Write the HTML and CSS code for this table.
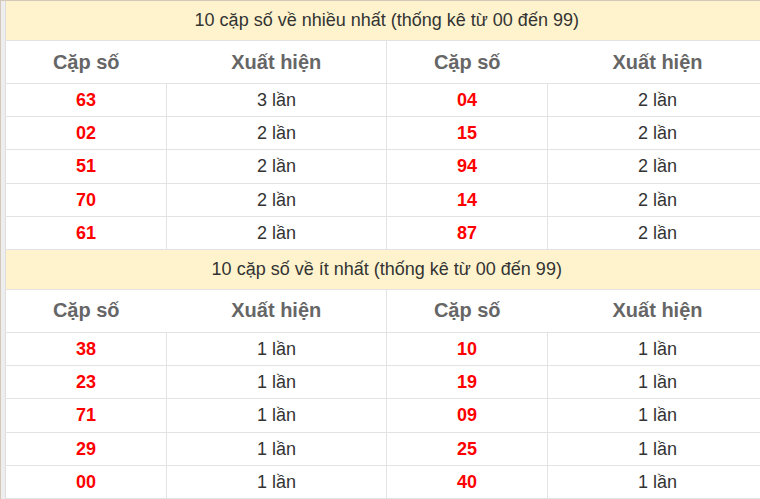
FILE: index.html
```html
<!DOCTYPE html>
<html lang="vi">
<head>
<meta charset="utf-8">
<link rel="stylesheet" href="styles.css">
</head>
<body>
<div class="frame">
<table class="stats">
  <colgroup><col class="c1"><col class="c2"><col class="c1"><col class="c2"></colgroup>
  <tr class="title"><td colspan="4">10 cặp số về nhiều nhất (thống kê từ 00 đến 99)</td></tr>
  <tr class="head"><th>Cặp số</th><th class="mid">Xuất hiện</th><th>Cặp số</th><th>Xuất hiện</th></tr>
  <tr><td class="num">63</td><td class="mid">3 lần</td><td class="num">04</td><td>2 lần</td></tr>
  <tr><td class="num">02</td><td class="mid">2 lần</td><td class="num">15</td><td>2 lần</td></tr>
  <tr><td class="num">51</td><td class="mid">2 lần</td><td class="num">94</td><td>2 lần</td></tr>
  <tr><td class="num">70</td><td class="mid">2 lần</td><td class="num">14</td><td>2 lần</td></tr>
  <tr><td class="num">61</td><td class="mid">2 lần</td><td class="num">87</td><td>2 lần</td></tr>
  <tr class="title"><td colspan="4">10 cặp số về ít nhất (thống kê từ 00 đến 99)</td></tr>
  <tr class="head"><th>Cặp số</th><th class="mid">Xuất hiện</th><th>Cặp số</th><th>Xuất hiện</th></tr>
  <tr><td class="num">38</td><td class="mid">1 lần</td><td class="num">10</td><td>1 lần</td></tr>
  <tr><td class="num">23</td><td class="mid">1 lần</td><td class="num">19</td><td>1 lần</td></tr>
  <tr><td class="num">71</td><td class="mid">1 lần</td><td class="num">09</td><td>1 lần</td></tr>
  <tr><td class="num">29</td><td class="mid">1 lần</td><td class="num">25</td><td>1 lần</td></tr>
  <tr><td class="num">00</td><td class="mid">1 lần</td><td class="num">40</td><td>1 lần</td></tr>
</table>
</div>
</body>
</html>
```
FILE: styles.css
```css
html, body {
  margin: 0;
  padding: 0;
  overflow: hidden;
  background: #ffffff;
}
.frame {
  width: 780px;
  border-top: 1px solid #d4c8b9;
  border-left: 1px solid #d4c8b9;
  background: #eeeeee;
  padding-left: 4px;
}
.stats {
  width: 763px;
  border-collapse: collapse;
  table-layout: fixed;
  background: #ffffff;
  font-family: "Liberation Sans", Arial, sans-serif;
  color: #333333;
  border-left: 1px solid #dddddd;
}
.c1 { width: 161px; }
.c2 { width: 220px; }
.stats td, .stats th {
  text-align: center;
  padding: 0;
  border-bottom: 1px solid #e3e3e3;
}
.stats td {
  height: 31.2px;
  padding-top: 1px;
  font-size: 18px;
  border-right: 1px solid #e3e3e3;
}
.stats .title td {
  height: 39px;
  padding-top: 0;
  background: #fef3cd;
  font-size: 18px;
  color: #333333;
  border-right: none;
}
.stats th {
  height: 42px;
  font-size: 20px;
  font-weight: bold;
  color: #666666;
}
.stats th.mid {
  border-right: 1px solid #e3e3e3;
}
.stats td.num {
  color: #ff0000;
  font-weight: bold;
}
```
